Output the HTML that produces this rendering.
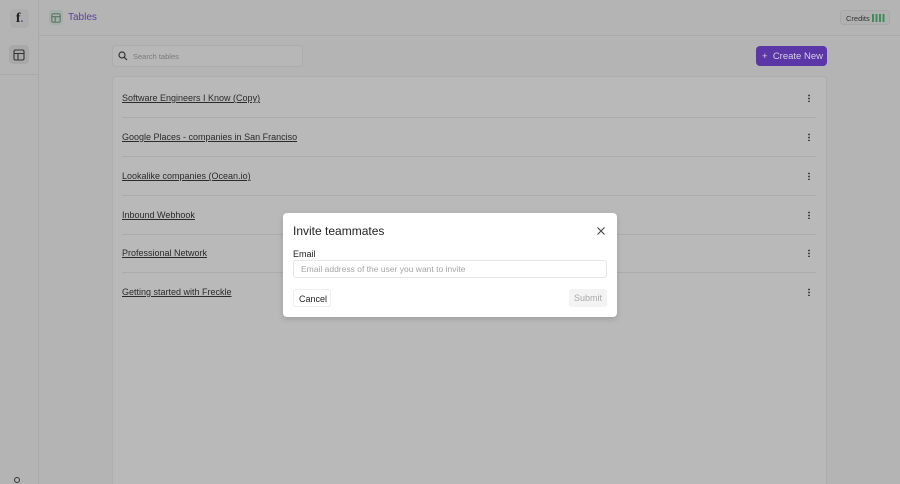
<!DOCTYPE html>
<html><head><style>
*{box-sizing:border-box;margin:0;padding:0}
html,body{width:900px;height:484px;overflow:hidden}
body{background:#b4b4b4;font-family:"Liberation Sans",sans-serif;position:relative;color:#2a2a2a}
.abs{position:absolute}
.row{position:absolute;left:122px;width:694px;height:39px;border-bottom:1px solid #acacac;font-size:9px;text-decoration:underline;color:#2b2b2b;padding-top:14px}
.dots{position:absolute;right:6px;top:15px;width:2px;height:8px;background:radial-gradient(circle,#444 0.8px,transparent 1px) 0 0/2px 3px}
</style></head><body>
<div class="abs" style="left:38px;top:0;width:1px;height:484px;background:#aaa"></div>
<div class="abs" style="left:39px;top:35px;width:861px;height:1px;background:#aaa"></div>
<div class="abs" style="left:0;top:74px;width:38px;height:1px;background:#aaa"></div>
<div class="abs" style="left:10px;top:9px;width:19px;height:19px;background:#adadad;border-radius:4px;font-family:'Liberation Serif',serif;font-weight:bold;font-size:14px;text-align:center;line-height:19px;color:#222">f<span style="color:#5b36a6;font-size:10px">.</span></div>
<div class="abs" style="left:9px;top:45px;width:20px;height:19px;background:#a8a8a8;border-radius:4px"></div>
<svg class="abs" style="left:13px;top:49px" width="12" height="12" viewBox="0 0 12 12" fill="none" stroke="#333" stroke-width="1.1"><rect x="1" y="1" width="10" height="10" rx="1.5"/><path d="M1 4.5h10M5 4.5v6.5"/></svg>
<div class="abs" style="left:49px;top:10px;width:14px;height:15px;background:#a6b0aa;border-radius:3px"></div>
<svg class="abs" style="left:51px;top:13px" width="10" height="10" viewBox="0 0 12 12" fill="none" stroke="#4d6a58" stroke-width="1.1"><rect x="1" y="1" width="10" height="10" rx="1.5"/><path d="M1 4.5h10M5 4.5v6.5"/></svg>
<div class="abs" style="left:68px;top:12px;font-size:10px;color:#5b3f9a">Tables</div>
<div class="abs" style="left:840px;top:10px;width:50px;height:15px;border:1px solid #a8a8a8;border-radius:3px;background:#b0b0b0;font-size:7.5px;padding:3px 0 0 5px;color:#333">Credits <span style="display:inline-block;width:13px;height:8px;vertical-align:-1px;background:repeating-linear-gradient(90deg,#3f8b5e 0 2px,transparent 2px 3.5px)"></span></div>
<div class="abs" style="left:112px;top:45px;width:191px;height:22px;border:1px solid #acacac;border-radius:4px;background:#b7b7b7"></div>
<svg class="abs" style="left:118px;top:51px" width="10" height="10" viewBox="0 0 10 10" fill="none" stroke="#333" stroke-width="1.2"><circle cx="4" cy="4" r="3"/><path d="M6.3 6.3L9 9"/></svg>
<div class="abs" style="left:133px;top:52px;font-size:7.5px;color:#7a7a7a">Search tables</div>
<div class="abs" style="left:756px;top:46px;width:71px;height:20px;background:#5b36a6;border-radius:4px;color:#d6cfe6;font-size:9.5px;padding:5px 0 0 6px">+&nbsp;&nbsp;Create New</div>
<div class="abs" style="left:112px;top:76px;width:715px;height:408px;background:#b9b9b9;border:1px solid #adadad;border-bottom:none;border-radius:4px 4px 0 0"></div>
<div class="row" style="top:79px">Software Engineers I Know (Copy)<div class="dots"></div></div>
<div class="row" style="top:118px">Google Places - companies in San Franciso<div class="dots"></div></div>
<div class="row" style="top:157px">Lookalike companies (Ocean.io)<div class="dots"></div></div>
<div class="row" style="top:196px">Inbound Webhook<div class="dots"></div></div>
<div class="row" style="top:234px">Professional Network<div class="dots"></div></div>
<div class="row" style="top:273px;border:none">Getting started with Freckle<div class="dots"></div></div>
<div class="abs" style="left:14px;top:477px;width:6px;height:6px;border:1px solid #333;border-radius:50%"></div>
<div class="abs" style="left:283px;top:213px;width:334px;height:104px;background:#fff;border-radius:4px;box-shadow:0 2px 6px rgba(0,0,0,.15)">
<div class="abs" style="left:10px;top:11px;font-size:12px;color:#222">Invite teammates</div>
<svg class="abs" style="left:314px;top:14px" width="8" height="8" viewBox="0 0 8 8" stroke="#444" stroke-width="1.1"><path d="M0.5 0.5l7 7M7.5 0.5l-7 7"/></svg>
<div class="abs" style="left:10px;top:36px;font-size:9px;color:#222">Email</div>
<div class="abs" style="left:10px;top:47px;width:314px;height:18px;border:1px solid #e6e6e6;border-radius:3px;font-size:8.5px;color:#a5a5a5;padding:3px 0 0 7px">Email address of the user you want to invite</div>
<div class="abs" style="left:10px;top:76px;width:38px;height:18px;border:1px solid #eee;border-radius:3px;font-size:9px;padding:4px 0 0 5px;color:#222">Cancel</div>
<div class="abs" style="left:286px;top:76px;width:38px;height:18px;background:#f3f3f3;border-radius:3px;font-size:9px;padding:4px 0 0 5px;color:#aaa">Submit</div>
</div>
</body></html>
